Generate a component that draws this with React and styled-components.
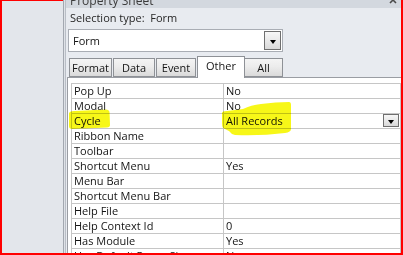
import React from 'react';
import styled, { createGlobalStyle } from 'styled-components';

const Global = createGlobalStyle`
  html, body { margin: 0; padding: 0; background: #fff; overflow: hidden; }
  #root { width: 403px; height: 255px; }
`;

const font = `"Open Sans", "Noto Sans", "Liberation Sans", sans-serif`;

const Shot = styled.div`
  width: 403px;
  height: 255px;
  box-sizing: border-box;
  border: 2px solid #ff0000;
  border-top: 0;
  display: flex;
  overflow: hidden;
  font-family: ${font};
  color: #141414;
`;

const LeftStrip = styled.div`
  width: 61px;
  flex: none;
  background: #e3e6eb;
  border-top: 1px solid #ff0000;
`;

const Divider = styled.div`
  width: 3px;
  flex: none;
  background: #dfe2e7;
  border-left: 1px solid #a3a8b0;
  border-right: 1px solid #b9bec6;
  box-sizing: border-box;
`;

const Panel = styled.div`
  flex: 1;
  min-width: 0;
  background: #e8ebf0;
  display: flex;
  flex-direction: column;
  overflow: hidden;
`;

const TitleBar = styled.div`
  height: 8px;
  flex: none;
  background: #d3d8df;
  display: flex;
  align-items: flex-end;
  justify-content: space-between;
  padding: 0 4px 0 4px;
  overflow: hidden;
`;

const TitleText = styled.span`
  font-size: 12px;
  line-height: 14px;
  color: #3a3a3a;
  white-space: nowrap;
`;

const SelectionRow = styled.div`
  height: 20px;
  flex: none;
  padding-left: 4px;
  font-size: 11px;
  line-height: 19px;
  color: #262626;
  white-space: pre;
`;

const Combo = styled.div`
  margin: 1px 0 0 2px;
  width: 215px;
  height: 23px;
  flex: none;
  box-sizing: border-box;
  border: 1px solid #a9adb4;
  background: #fff;
  display: flex;
  align-items: center;
  padding-left: 4px;
  font-size: 11px;
`;

const DropButton = styled.div`
  margin-left: auto;
  margin-right: 1px;
  width: ${p => p.$w}px;
  height: ${p => p.$h}px;
  flex: none;
  box-sizing: border-box;
  border: 1px solid #6f6f6f;
  background: linear-gradient(#f7f7f7, #e9e9e9 50%, #d9d9d9);
  display: flex;
  align-items: center;
  justify-content: center;
  padding-top: ${p => p.$pt || 0}px;
`;

const Triangle = styled.div`
  width: 0;
  height: 0;
  border-left: 3.5px solid transparent;
  border-right: 3.5px solid transparent;
  border-top: 4px solid #000;
`;

const TabRow = styled.div`
  margin-top: 4px;
  height: 21px;
  flex: none;
  display: flex;
  align-items: flex-end;
  padding-left: 3px;
  position: relative;
  z-index: 1;
`;

const Tab = styled.div`
  width: ${p => p.$w}px;
  margin-left: ${p => p.$ml || 0}px;
  height: ${p => (p.$active ? 22 : 19)}px;
  margin-bottom: ${p => (p.$active ? -1 : 0)}px;
  box-sizing: border-box;
  border: 1px solid #8e9196;
  border-bottom: ${p => (p.$active ? '0' : '1px solid #8e9196')};
  background: ${p => (p.$active ? '#fff' : 'linear-gradient(#f4f4f4, #ececec 45%, #dadada)')};
  font-size: 11px;
  line-height: ${p => (p.$active ? 18 : 17)}px;
  text-align: center;
  color: #141414;
  flex: none;
`;

const ContentFrame = styled.div`
  margin-left: 1px;
  width: 338px;
  flex: 1;
  box-sizing: border-box;
  border: 1px solid #9a9da3;
  background: #fff;
  padding: 5px 3px 0 3px;
`;

const Grid = styled.div`
  position: relative;
  width: 330px;
  box-sizing: border-box;
  border: 1px solid #c6c6c6;
  border-bottom: 0;
`;

const Row = styled.div`
  display: grid;
  grid-template-columns: 152px 1fr;
  height: 15px;
  box-sizing: border-box;
  border-bottom: 1px solid #c6c6c6;
`;

const Cell = styled.div`
  box-sizing: border-box;
  border-right: ${p => (p.$label ? '1px solid #c6c6c6' : '0')};
  padding-left: 2px;
  font-size: 11px;
  line-height: 14px;
  white-space: nowrap;
  overflow: hidden;
  display: flex;
  align-items: flex-start;
`;

const Highlight = styled.svg`
  position: absolute;
  left: ${p => p.$x}px;
  top: ${p => p.$y}px;
  mix-blend-mode: multiply;
  pointer-events: none;
  overflow: visible;
`;

const rows = [
  ['Pop Up', 'No'],
  ['Modal', 'No'],
  ['Cycle', 'All Records', true],
  ['Ribbon Name', ''],
  ['Toolbar', ''],
  ['Shortcut Menu', 'Yes'],
  ['Menu Bar', ''],
  ['Shortcut Menu Bar', ''],
  ['Help File', ''],
  ['Help Context Id', '0'],
  ['Has Module', 'Yes'],
  ['Use Default Paper Size', 'No'],
];

const tabs = [
  { label: 'Format', w: 43 },
  { label: 'Data', w: 42, ml: 1 },
  { label: 'Event', w: 40, ml: 1 },
  { label: 'Other', w: 48, ml: 1, active: true },
  { label: 'All', w: 39, ml: -1 },
];

export default function App() {
  return (
    <>
      <Global />
      <Shot>
        <LeftStrip />
        <Divider />
        <Panel>
          <TitleBar>
            <TitleText>Property Sheet</TitleText>
            <svg width="8" height="8" viewBox="0 0 8 8">
              <path d="M1 -3 L4 0 L7 -3 M1 3 L4 0 L7 3" stroke="#4a4a4a" strokeWidth="1.6" fill="none" />
            </svg>
          </TitleBar>
          <SelectionRow>{'Selection type:  Form'}</SelectionRow>
          <Combo>
            Form
            <DropButton $w={17} $h={19} $pt={2}>
              <Triangle />
            </DropButton>
          </Combo>
          <TabRow>
            {tabs.map(t => (
              <Tab key={t.label} $w={t.w} $ml={t.ml} $active={t.active}>
                {t.label}
              </Tab>
            ))}
          </TabRow>
          <ContentFrame>
            <Grid>
              {rows.map(([label, value, drop]) => (
                <Row key={label}>
                  <Cell $label>{label}</Cell>
                  <Cell>
                    {value}
                    {drop && (
                      <DropButton $w={16} $h={13} $pt={3}>
                        <Triangle />
                      </DropButton>
                    )}
                  </Cell>
                </Row>
              ))}
              <Highlight $x={-4} $y={25} width="43" height="21" viewBox="0 0 43 21">
                <path d="M1 4 Q2 2 6 2 L38 0.5 Q41 0.5 41.5 3 L42 16 Q42 18 39 18.5 L4 20 Q1 20 1 17 Z" fill="#f7f718" />
              </Highlight>
              <Highlight $x={149} $y={17} width="72" height="35" viewBox="0 0 72 35">
                <path d="M1 12 Q1 10 6 10 L22 8 Q30 4 40 3 Q55 1 68 1 Q70 1 70 4 L70 28 Q70 31 64 32 Q40 35 14 34 Q10 33 8 30 L2 27 Q1 26 1 22 Z" fill="#f7f718" />
              </Highlight>
            </Grid>
          </ContentFrame>
        </Panel>
      </Shot>
    </>
  );
}
